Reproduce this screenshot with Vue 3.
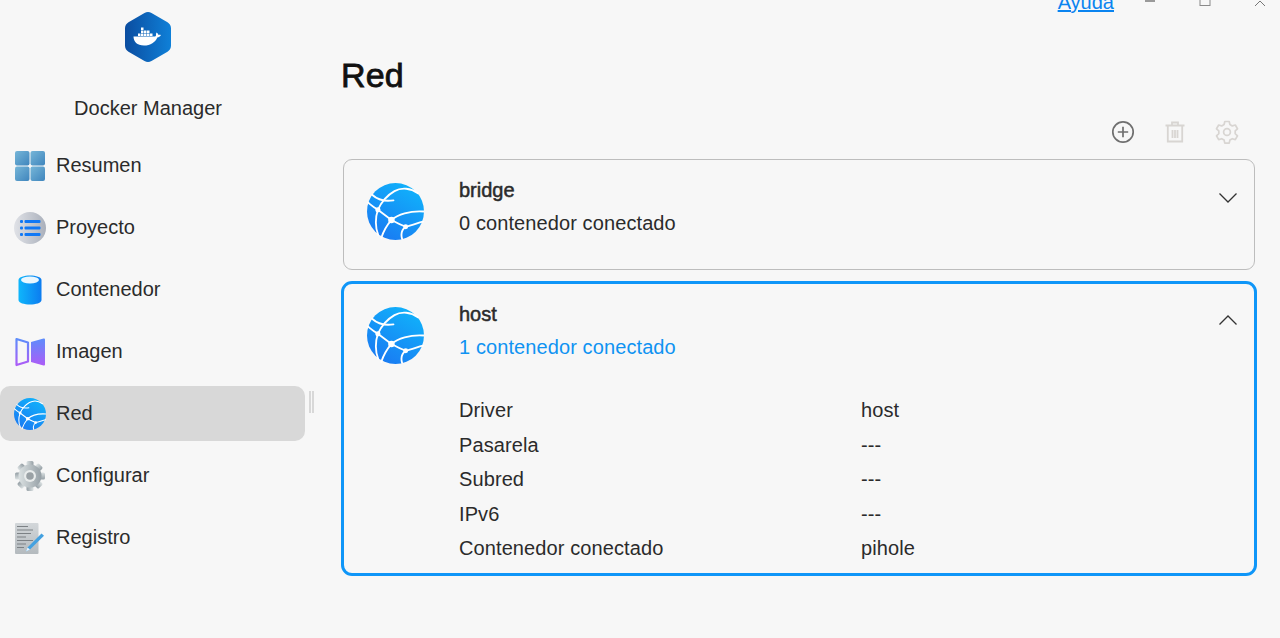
<script setup>
const navItems = [
  { key: 'summary', label: 'Resumen' },
  { key: 'project', label: 'Proyecto' },
  { key: 'container', label: 'Contenedor' },
  { key: 'image', label: 'Imagen' },
  { key: 'network', label: 'Red', active: true },
  { key: 'settings', label: 'Configurar' },
  { key: 'log', label: 'Registro' },
]

const hostDetails = [
  { name: 'Driver', value: 'host' },
  { name: 'Pasarela', value: '---' },
  { name: 'Subred', value: '---' },
  { name: 'IPv6', value: '---' },
  { name: 'Contenedor conectado', value: 'pihole' },
]

const gearTeeth = [0, 45, 90, 135, 180, 225, 270, 315]

// whale containers, [x, y] inside the 46x50 logo
const logoBoxes = [
  [16, 15.5],
  [16, 18.5], [19, 18.5], [22, 18.5],
  [13, 21.5], [16, 21.5], [19, 21.5], [22, 21.5], [25, 21.5],
]
</script>

<template>
  <div class="app">
    <svg class="defs" width="0" height="0">
      <defs>
        <linearGradient id="hexGrad" x1="0" y1="0" x2="1" y2="0">
          <stop offset="0" stop-color="#0b4da0" />
          <stop offset="1" stop-color="#0f80d8" />
        </linearGradient>
        <linearGradient id="globeGrad" x1="0.8" y1="0" x2="0.2" y2="1">
          <stop offset="0" stop-color="#10b4fb" />
          <stop offset="1" stop-color="#1a78f2" />
        </linearGradient>
        <linearGradient id="tileGrad" x1="0" y1="0" x2="1" y2="1">
          <stop offset="0" stop-color="#76b6d8" />
          <stop offset="1" stop-color="#3f85bd" />
        </linearGradient>
        <linearGradient id="discGrad" x1="0" y1="0" x2="1" y2="0">
          <stop offset="0" stop-color="#e0e2e7" />
          <stop offset="1" stop-color="#aab0bb" />
        </linearGradient>
        <linearGradient id="cylGrad" x1="0" y1="0" x2="1" y2="0">
          <stop offset="0" stop-color="#0fb6fb" />
          <stop offset="1" stop-color="#0c7cf0" />
        </linearGradient>
        <linearGradient id="bookGrad" x1="0" y1="0" x2="0" y2="1">
          <stop offset="0" stop-color="#5d8dfb" />
          <stop offset="1" stop-color="#ad5cf7" />
        </linearGradient>
        <linearGradient id="gearGrad" x1="0" y1="0" x2="1" y2="0">
          <stop offset="0" stop-color="#dce2e3" />
          <stop offset="1" stop-color="#959fa5" />
        </linearGradient>
        <linearGradient id="pageGrad" x1="0" y1="0" x2="0" y2="1">
          <stop offset="0" stop-color="#d3d7da" />
          <stop offset="1" stop-color="#b4babe" />
        </linearGradient>
        <symbol id="globe" viewBox="0 0 56 56">
          <circle cx="28" cy="28" r="28" fill="url(#globeGrad)" />
          <g fill="none" stroke="#fff" stroke-width="1.8" stroke-linecap="round">
            <path d="M10.700 26.300C14 19 20 12 27 8c7-4 16-3 23 2" />
            <path d="M5 11.500c5 4.500 12 7 21 5.500" />
            <path d="M1 19c3 3 7 5.500 9.700 7.300L24 36.300c5 2.700 9 4.700 14 6.700 6-1 12-4 17-5" />
            <path d="M24 36.300c6-5.300 18-9.300 32-8.300" />
            <path d="M10.700 26.300C8 34 8 44 11 51" />
            <path d="M24 36.300C20 41 16 48 14 54" />
            <path d="M38 43c-4 3-5 7-3.500 12" />
          </g>
          <circle cx="10.700" cy="26.300" r="2.500" fill="#fff" />
          <circle cx="24" cy="36.300" r="3.200" fill="#fff" />
          <circle cx="38" cy="43" r="2.400" fill="#fff" />
        </symbol>
      </defs>
    </svg>

    <aside class="sidebar">
      <div class="brand">
        <svg class="brand-logo" width="46" height="50" viewBox="0 0 46 50">
          <path
            d="M19.500 1 3.500 10.300C1.300 11.600 0 13.800 0 16.300v17.400c0 2.500 1.300 4.700 3.500 6L19.500 49c2.200 1.300 4.800 1.300 7 0l16-9.300c2.200-1.300 3.500-3.500 3.500-6V16.300c0-2.500-1.300-4.700-3.500-6L26.500 1c-2.200-1.300-4.800-1.300-7 0Z"
            fill="url(#hexGrad)"
          />
          <g fill="#fff">
            <rect
              v-for="box in logoBoxes"
              :key="box.join()"
              :x="box[0]"
              :y="box[1]"
              width="2.500"
              height="2.500"
            />
            <path d="M8.500 24.500H30c.8-.2 1-.8 1-1.800-.1-.9.2-1.700.6-2.300.9.600 1.500 1.400 1.700 2.400.9-.2 1.800-.1 2.700.3-.9 1.600-2.200 2.300-3.700 2.300C30.500 30 25.500 33.500 19 33.500c-7 0-10.500-4-10.500-9Z" />
          </g>
        </svg>
        <div class="brand-name">Docker Manager</div>
      </div>

      <nav class="nav">
        <div
          v-for="item in navItems"
          :key="item.key"
          class="nav-item"
          :class="{ active: item.active }"
        >
          <span class="nav-icon">
            <svg v-if="item.key === 'summary'" width="32" height="32" viewBox="0 0 32 32">
              <rect x="1" y="1" width="14.500" height="14.500" rx="2" fill="url(#tileGrad)" />
              <rect x="16.500" y="1" width="14.500" height="14.500" rx="2" fill="url(#tileGrad)" />
              <rect x="1" y="16.500" width="14.500" height="14.500" rx="2" fill="url(#tileGrad)" />
              <rect x="16.500" y="16.500" width="14.500" height="14.500" rx="2" fill="url(#tileGrad)" />
            </svg>
            <svg v-else-if="item.key === 'project'" width="32" height="32" viewBox="0 0 32 32">
              <circle cx="16" cy="16" r="16" fill="url(#discGrad)" />
              <g fill="#1078f5">
                <rect x="6" y="8" width="3" height="3" rx="1" />
                <rect x="10.500" y="8" width="16" height="3" rx="1" />
                <rect x="6" y="14.500" width="3" height="3" rx="1" />
                <rect x="10.500" y="14.500" width="16" height="3" rx="1" />
                <rect x="6" y="21" width="3" height="3" rx="1" />
                <rect x="10.500" y="21" width="16" height="3" rx="1" />
              </g>
            </svg>
            <svg v-else-if="item.key === 'container'" width="32" height="32" viewBox="0 0 32 32">
              <path d="M4.500 6c0-6 23-6 23 0v20c0 6-23 6-23 0Z" fill="url(#cylGrad)" />
              <ellipse cx="16" cy="6" rx="9" ry="3.400" fill="#e9f7ff" />
            </svg>
            <svg v-else-if="item.key === 'image'" width="32" height="32" viewBox="0 0 32 32">
              <path
                d="M2.500 3 14 6.500v19L2.500 29Z"
                fill="none"
                stroke="url(#bookGrad)"
                stroke-width="2.200"
                stroke-linejoin="round"
              />
              <path d="M17 6 29.500 2.500c.9-.2 1.500.3 1.500 1.200v24.600c0 .9-.6 1.400-1.500 1.200L17 26Z" fill="url(#bookGrad)" />
            </svg>
            <svg v-else-if="item.key === 'network'" width="32" height="32" viewBox="0 0 32 32">
              <use href="#globe" width="32" height="32" />
            </svg>
            <svg v-else-if="item.key === 'settings'" width="32" height="32" viewBox="0 0 32 32">
              <g fill="url(#gearGrad)">
                <rect
                  v-for="angle in gearTeeth"
                  :key="angle"
                  x="12.500"
                  y="1"
                  width="7"
                  height="7"
                  rx="1.500"
                  :transform="`rotate(${angle} 16 16)`"
                />
              </g>
              <circle cx="16" cy="16" r="11.500" fill="url(#gearGrad)" />
              <circle cx="16" cy="16" r="6" fill="#e9ecec" />
              <circle cx="16" cy="16" r="3.800" fill="#9aa1a5" />
            </svg>
            <svg v-else width="32" height="32" viewBox="0 0 32 32">
              <rect x="1" y="1" width="23.500" height="31" rx="1" fill="url(#pageGrad)" />
              <g stroke="#7c8185" stroke-width="1">
                <path d="M3 4.500h11M3 8h16M3 11.500h14M3 15h9M3 18.500h16M3 22h9M3 25.500h7" />
              </g>
              <path d="M12 29.500 13.500 25.500 27.500 11.500l2.500 2.300L16 27.500Z" fill="#44a1e0" />
              <path d="M12 29.500l1.500-4 2.500 2Z" fill="#e9f3fa" />
            </svg>
          </span>
          <span class="nav-label">{{ item.label }}</span>
        </div>
      </nav>
    </aside>

    <div class="splitter"></div>

    <main class="main">
      <div class="top-bar">
        <a class="help-link" href="#">Ayuda</a>
        <div class="window-controls">
          <svg width="12" height="12" viewBox="0 0 12 12">
            <path d="M1 1h10" stroke="#9a9a9a" stroke-width="2" />
          </svg>
          <svg width="12" height="12" viewBox="0 0 12 12">
            <rect x="1" y="-5" width="10" height="10.500" fill="none" stroke="#8a8a8a" stroke-width="1" />
          </svg>
          <svg width="12" height="12" viewBox="0 0 12 12">
            <path d="M1 6 6 1l5 5" fill="none" stroke="#777" stroke-width="1" />
          </svg>
        </div>
      </div>

      <h1 class="page-title">Red</h1>

      <div class="toolbar">
        <svg width="24" height="24" viewBox="0 0 24 24" fill="none" stroke="#6f6f6f" stroke-width="1.700">
          <circle cx="12" cy="12" r="10.200" />
          <path d="M12 6.800v10.400M6.800 12h10.400" />
        </svg>
        <svg width="24" height="24" viewBox="0 0 24 24" fill="none" stroke="#d8d5d2" stroke-width="1.800">
          <path d="M2.500 5.500h19M9 5V2.500h6V5M4.800 6v15.500h14.400V6M9.500 10v8M12 10v8M14.500 10v8" />
        </svg>
        <svg width="24" height="24" viewBox="0 0 24 24" fill="none" stroke="#d8d5d2" stroke-width="1.700">
          <path d="M9.800 1.500h4.400l.7 3 2.400 1.400 3-.9 2.200 3.800-2.300 2.100v2.800l2.300 2.100-2.200 3.800-3-.9-2.400 1.400-.7 3H9.800l-.7-3-2.400-1.400-3 .9-2.200-3.800 2.300-2.100v-2.800L1.500 8.800 3.700 5l3 .9 2.400-1.400Z" stroke-linejoin="round" />
          <circle cx="12" cy="12" r="3.400" />
        </svg>
      </div>

      <section class="card">
        <div class="card-head">
          <svg class="globe" width="57" height="57"><use href="#globe" width="57" height="57" /></svg>
          <div class="card-text">
            <div class="card-name">bridge</div>
            <div class="card-sub">0 contenedor conectado</div>
          </div>
          <svg class="chevron" width="20" height="12" viewBox="0 0 20 12">
            <path d="M1.500 1.500 10 10l8.500-8.500" fill="none" stroke="#333" stroke-width="1.300" />
          </svg>
        </div>
      </section>

      <section class="card open">
        <div class="card-head">
          <svg class="globe" width="57" height="57"><use href="#globe" width="57" height="57" /></svg>
          <div class="card-text">
            <div class="card-name">host</div>
            <div class="card-sub link">1 contenedor conectado</div>
          </div>
          <svg class="chevron" width="20" height="12" viewBox="0 0 20 12">
            <path d="M1.500 10.500 10 2l8.500 8.500" fill="none" stroke="#333" stroke-width="1.300" />
          </svg>
        </div>
        <dl class="details">
          <template v-for="row in hostDetails" :key="row.name">
            <dt>{{ row.name }}</dt>
            <dd>{{ row.value }}</dd>
          </template>
        </dl>
      </section>
    </main>
  </div>
</template>

<style scoped>
.app {
  display: flex;
  height: 638px;
  overflow: hidden;
  background: #f7f7f7;
  color: #2b2b2b;
  font-family: "Liberation Sans", Arial, sans-serif;
  font-size: 20px;
}

.defs {
  position: absolute;
}

.sidebar {
  flex: none;
  width: 305px;
  padding-top: 12px;
}

.brand {
  display: flex;
  flex-direction: column;
  align-items: center;
  height: 126px;
  margin-left: -9px;
}

.brand-logo {
  display: block;
}

.brand-name {
  margin-top: 34px;
  line-height: 24px;
}

.nav {
  display: flex;
  flex-direction: column;
  gap: 7px;
}

.nav-item {
  display: flex;
  align-items: center;
  height: 55px;
  padding-left: 14px;
  border-radius: 10px;
}

.nav-item.active {
  background: #d8d8d8;
}

.nav-icon {
  display: flex;
  width: 32px;
  height: 32px;
  margin-right: 10px;
}

.splitter {
  flex: none;
  width: 5px;
  height: 22px;
  margin: 391px 0 0 4px;
  border-left: 2px solid #d8d8d8;
  border-right: 2px solid #d8d8d8;
  box-sizing: border-box;
}

.main {
  flex: 1;
  min-width: 0;
  padding: 0 25px 0 29px;
  box-sizing: border-box;
}

.top-bar {
  display: flex;
  justify-content: flex-end;
  align-items: flex-start;
  height: 14px;
  margin: -9px -25px 0 0;
}

.help-link {
  color: #0a84f0;
  line-height: 23px;
  margin-right: 30px;
}

.window-controls {
  display: flex;
  gap: 43px;
  margin-right: 14px;
  margin-top: 9px;
}

.page-title {
  margin: 45px 0 0 -2px;
  font-size: 34px;
  line-height: 50px;
  font-weight: 400;
  letter-spacing: 0.1px;
  -webkit-text-stroke: 0.8px #111;
  color: #111;
}

.toolbar {
  display: flex;
  justify-content: flex-end;
  gap: 28px;
  margin-top: 20px;
  padding-right: 16px;
}

.card {
  margin-top: 15px;
  border: 1px solid #bdbdbd;
  border-radius: 9px;
  height: 111px;
  box-sizing: border-box;
}

.card.open {
  height: 295px;
  margin: 11px -2px 0 -2px;
  border: 3px solid #0f96f8;
  border-radius: 11px;
}

.card-head {
  display: flex;
  align-items: flex-start;
  padding: 23px 16px 0 23px;
}

.globe {
  flex: none;
}

.card-text {
  flex: 1;
  margin-left: 35px;
}

.card-name {
  line-height: 24px;
  margin-top: -5px;
  -webkit-text-stroke: 0.5px #2b2b2b;
}

.card-sub {
  margin-top: 9px;
  line-height: 24px;
  letter-spacing: 0.1px;
}

.card-sub.link {
  color: #0f93f2;
}

.chevron {
  margin-top: 9px;
}

.card.open .chevron {
  margin-top: 7px;
}

.details {
  display: grid;
  grid-template-columns: 402px 1fr;
  grid-auto-rows: 34.5px;
  align-items: center;
  margin: 29px 0 0 115px;
}

.details dt,
.details dd {
  margin: 0;
  line-height: 24px;
  letter-spacing: 0.1px;
}
</style>
